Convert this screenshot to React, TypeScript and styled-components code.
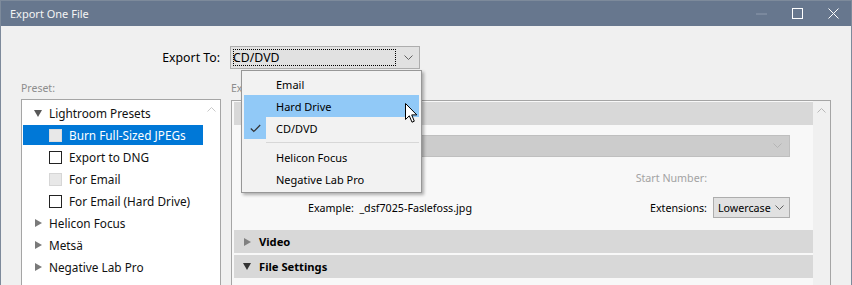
import * as React from 'react';
import styled, { createGlobalStyle } from 'styled-components';

const GlobalStyle = createGlobalStyle`
	body {
		margin: 0;
		background: #f0f0f0;
		font-family: 'Noto Sans', 'Segoe UI', sans-serif;
		font-size: 10.7px;
		color: #000;
	}
`;

const Chevron = ({ color = '#555', dir = 'down' }: { color?: string; dir?: 'down' | 'up' }) => (
	<svg width="9" height="6" viewBox="0 0 9 6">
		<polyline
			points={dir === 'down' ? '0.5,0.5 4.5,4.5 8.5,0.5' : '0.5,5.5 4.5,1.5 8.5,5.5'}
			fill="none"
			stroke={color}
			strokeWidth="1"
		/>
	</svg>
);

const App = () => {
	return (
		<>
			<GlobalStyle />
			<Window>
				<TitleBar>
					<Title>Export One File</Title>
					<Controls>
						<CtrlButton>
							<svg width="11" height="2" viewBox="0 0 11 2">
								<line x1="0" y1="1" x2="11" y2="1" stroke="#8f9bad" strokeWidth="1" />
							</svg>
						</CtrlButton>
						<CtrlButton>
							<svg width="11" height="11" viewBox="0 0 11 11">
								<rect x="0.5" y="0.5" width="10" height="10" fill="none" stroke="#fff" strokeWidth="1" />
							</svg>
						</CtrlButton>
						<CtrlButton>
							<svg width="11" height="11" viewBox="0 0 11 11">
								<path d="M0.5 0.5 L10.5 10.5 M10.5 0.5 L0.5 10.5" stroke="#fff" strokeWidth="1" />
							</svg>
						</CtrlButton>
					</Controls>
				</TitleBar>

				<Body>
					<ExportRow>
						<FieldLabel>Export To:</FieldLabel>
						<Select $width={190}>
							<FocusText>CD/DVD</FocusText>
							<Chevron color="#606060" />
						</Select>
					</ExportRow>

					<Columns>
						<Column>
							<PaneLabel>Preset:</PaneLabel>
							<ListBox>
								<Tree>
									<TreeRow>
										<TriDown />
										<span>Lightroom Presets</span>
									</TreeRow>
									<TreeRow $child $selected>
										<Check $variant="faded" />
										<span>Burn Full-Sized JPEGs</span>
									</TreeRow>
									<TreeRow $child>
										<Check />
										<span>Export to DNG</span>
									</TreeRow>
									<TreeRow $child>
										<Check $variant="disabled" />
										<span>For Email</span>
									</TreeRow>
									<TreeRow $child>
										<Check />
										<span>For Email (Hard Drive)</span>
									</TreeRow>
									<TreeRow>
										<TriRight />
										<span>Helicon Focus</span>
									</TreeRow>
									<TreeRow>
										<TriRight />
										<span>Metsä</span>
									</TreeRow>
									<TreeRow>
										<TriRight />
										<span>Negative Lab Pro</span>
									</TreeRow>
								</Tree>
								<ScrollTrack $bg="#fff">
									<Chevron dir="up" color="#c9c9c9" />
								</ScrollTrack>
							</ListBox>
						</Column>

						<Column>
							<PaneLabel>Export Location</PaneLabel>
							<Panel>
								<Sections>
									<SectionBar>
										<TriDownSmall />
										<span>Export Location</span>
									</SectionBar>
									<SectionBody>
										<DisabledSelect>
											<Chevron color="#b5b5b5" />
										</DisabledSelect>
										<FormLine>
											<Spacer />
											<MutedLabel>Start Number:</MutedLabel>
											<FieldGap />
										</FormLine>
										<FormLine>
											<ExampleText>
												Example:&nbsp;&nbsp;<span>_dsf7025-Faslefoss.jpg</span>
											</ExampleText>
											<Spacer />
											<span>Extensions:</span>
											<Select $width={77} $small>
												<span>Lowercase</span>
												<Chevron color="#606060" />
											</Select>
										</FormLine>
									</SectionBody>
									<SectionBar>
										<TriRightSmall />
										<span>Video</span>
									</SectionBar>
									<SectionBar>
										<TriDownSmall />
										<span>File Settings</span>
									</SectionBar>
								</Sections>
								<ScrollTrack $bg="#f0f0f0">
									<Chevron dir="up" color="#b8b8b8" />
								</ScrollTrack>
							</Panel>
						</Column>
					</Columns>

					<Menu>
						<MenuItem>
							<CheckCell />
							<span>Email</span>
						</MenuItem>
						<MenuItem $hover>
							<CheckCell />
							<span>Hard Drive</span>
						</MenuItem>
						<MenuItem>
							<CheckCell $checked>
								<svg width="11" height="9" viewBox="0 0 11 9">
									<polyline points="0.8,4.5 3.8,7.5 10.2,1" fill="none" stroke="#333" strokeWidth="1.2" />
								</svg>
							</CheckCell>
							<span>CD/DVD</span>
						</MenuItem>
						<MenuSeparator />
						<MenuItem>
							<CheckCell />
							<span>Helicon Focus</span>
						</MenuItem>
						<MenuItem>
							<CheckCell />
							<span>Negative Lab Pro</span>
						</MenuItem>
					</Menu>

					<Cursor width="13" height="21" viewBox="0 0 13 21">
						<path
							d="M0.5 0.5 L0.5 16.5 L4.3 12.8 L7 19.2 L9.3 18.2 L6.7 11.9 L11.8 11.9 Z"
							fill="#fff"
							stroke="#000"
							strokeWidth="1"
							strokeLinejoin="miter"
						/>
					</Cursor>
				</Body>
			</Window>
		</>
	);
};

export default App;

const Window = styled.div`
	width: 852px;
	height: 285px;
	box-sizing: border-box;
	border: 1px solid #7d8a9b;
	border-bottom: none;
	background: #f0f0f0;
	overflow: hidden;
	display: flex;
	flex-direction: column;
`;

const TitleBar = styled.div`
	height: 25px;
	flex: none;
	background: #67778e;
	display: flex;
	align-items: center;
	justify-content: space-between;
	padding-left: 9px;
`;

const Title = styled.div`
	color: #f4f4f4;
	font-size: 11px;
`;

const Controls = styled.div`
	display: flex;
	height: 100%;
`;

const CtrlButton = styled.div`
	width: 36px;
	height: 100%;
	display: flex;
	align-items: center;
	justify-content: center;
`;

const Body = styled.div`
	position: relative;
	flex: 1;
	padding: 20px 0 0 20px;
`;

const ExportRow = styled.div`
	display: flex;
	align-items: center;
	height: 23px;
	gap: 10px;
`;

const FieldLabel = styled.span`
	width: 199px;
	text-align: right;
	font-size: 12.3px;
`;

const Select = styled.div<{ $width: number; $small?: boolean }>`
	width: ${(p) => p.$width}px;
	height: ${(p) => (p.$small ? 21 : 23)}px;
	box-sizing: border-box;
	border: 1px solid #adadad;
	background: #e1e1e1;
	display: flex;
	align-items: center;
	justify-content: space-between;
	padding: 0 ${(p) => (p.$small ? 5 : 6)}px 0 2px;
	margin-left: ${(p) => (p.$small ? 6 : 0)}px;
	font-size: ${(p) => (p.$small ? 10.7 : 12.3)}px;
	white-space: nowrap;
	span {
		padding-left: ${(p) => (p.$small ? 2 : 0)}px;
	}
`;

const FocusText = styled.span`
	flex: 1;
	margin-right: 8px;
	height: 17px;
	line-height: 17px;
	outline: 1px dotted #000;
	outline-offset: -1px;
	padding-left: 1px;
`;

const Columns = styled.div`
	display: flex;
	gap: 10px;
	margin-top: 11px;
`;

const Column = styled.div`
	display: flex;
	flex-direction: column;
	&:first-child {
		width: 200px;
	}
	&:last-child {
		width: 600px;
	}
`;

const PaneLabel = styled.div`
	color: #8d8d8d;
	height: 19px;
	line-height: 16px;
	font-size: 10.5px;
`;

const ListBox = styled.div`
	height: 200px;
	box-sizing: border-box;
	border: 1px solid #a5a5a5;
	background: #fff;
	display: flex;
`;

const Tree = styled.div`
	flex: 1;
	padding-top: 3px;
`;

const TreeRow = styled.div<{ $child?: boolean; $selected?: boolean }>`
	height: 20px;
	margin: 0 0 2px 1px;
	display: flex;
	align-items: center;
	padding-left: ${(p) => (p.$child ? 26 : 11)}px;
	gap: 7px;
	font-size: 11.8px;
	background: ${(p) => (p.$selected ? '#0078d7' : 'transparent')};
	color: ${(p) => (p.$selected ? '#fff' : '#111')};
	white-space: nowrap;
`;

const TriDown = styled.span`
	width: 0;
	height: 0;
	border-left: 4px solid transparent;
	border-right: 4px solid transparent;
	border-top: 7px solid #585858;
`;

const TriRight = styled.span`
	width: 0;
	height: 0;
	border-top: 4px solid transparent;
	border-bottom: 4px solid transparent;
	border-left: 7px solid #7a7a7a;
	margin-left: 1px;
`;

const TriDownSmall = styled(TriDown)`
	border-top-color: #333;
`;

const TriRightSmall = styled(TriRight)`
	border-left-color: #808080;
`;

const Check = styled.span<{ $variant?: 'faded' | 'disabled' }>`
	width: 13px;
	height: 13px;
	box-sizing: border-box;
	border: 1px solid
		${(p) => (p.$variant === 'faded' ? '#dcdcdc' : p.$variant === 'disabled' ? '#d6d6d6' : '#222')};
	background: ${(p) => (p.$variant ? '#e8e8e8' : '#fff')};
`;

const ScrollTrack = styled.div<{ $bg: string }>`
	width: 17px;
	background: ${(p) => p.$bg};
	display: flex;
	justify-content: center;
	padding-top: 6px;
	box-sizing: border-box;
`;

const Panel = styled.div`
	height: 200px;
	margin-top: 1px;
	box-sizing: border-box;
	border: 1px solid #a5a5a5;
	background: #f8f8f8;
	display: flex;
`;

const Sections = styled.div`
	flex: 1;
	padding: 1px 0 0 2px;
	display: flex;
	flex-direction: column;
	gap: 2px;
`;

const SectionBar = styled.div`
	height: 23px;
	flex: none;
	background: #d8d8d8;
	display: flex;
	align-items: center;
	gap: 8px;
	padding-left: 9px;
	font-weight: bold;
	font-size: 11.2px;
`;

const SectionBody = styled.div`
	height: 102px;
	padding: 9px 23px 0 0;
	display: flex;
	flex-direction: column;
	box-sizing: border-box;
	margin-top: -1px;
`;

const DisabledSelect = styled.div`
	height: 22px;
	margin-left: 60px;
	box-sizing: border-box;
	border: 1px solid #bfbfbf;
	background: #cccccc;
	display: flex;
	align-items: center;
	justify-content: flex-end;
	padding-right: 7px;
`;

const FormLine = styled.div`
	display: flex;
	align-items: center;
	height: 21px;
	margin-top: 9px;
	white-space: nowrap;
	&:nth-child(2) {
		margin-top: 10px;
	}
`;

const Spacer = styled.div`
	flex: 1;
`;

const MutedLabel = styled.span`
	color: #a3a3a3;
`;

const FieldGap = styled.div`
	width: 83px;
`;

const ExampleText = styled.span`
	padding-left: 74px;
`;

const Menu = styled.div`
	position: absolute;
	left: 240px;
	top: 44px;
	width: 181px;
	box-sizing: border-box;
	border: 1px solid #979797;
	background: #f2f2f2;
	padding: 2px;
	box-shadow: 2px 2px 3px rgba(0, 0, 0, 0.3);
	font-size: 11px;
`;

const MenuItem = styled.div<{ $hover?: boolean }>`
	height: 22px;
	display: flex;
	align-items: center;
	background: ${(p) => (p.$hover ? '#91c9f7' : 'transparent')};
	white-space: nowrap;
`;

const CheckCell = styled.span<{ $checked?: boolean }>`
	width: 22px;
	height: 22px;
	margin-right: 10px;
	display: flex;
	align-items: center;
	justify-content: center;
	background: ${(p) => (p.$checked ? '#91c9f7' : 'transparent')};
`;

const MenuSeparator = styled.div`
	height: 7px;
	margin-left: 22px;
	background: linear-gradient(transparent 3px, #d7d7d7 3px, #d7d7d7 4px, transparent 4px);
`;

const Cursor = styled.svg`
	position: absolute;
	left: 404px;
	top: 77px;
`;
